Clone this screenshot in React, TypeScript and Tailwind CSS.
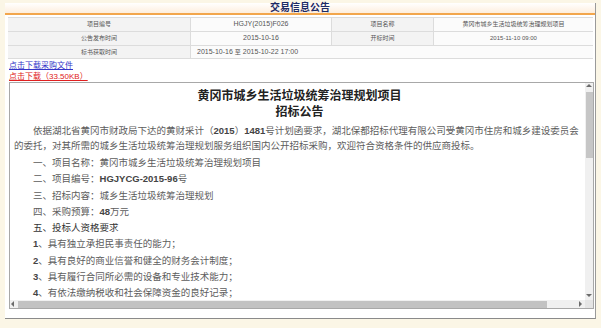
const sans = { fontFamily: '"Liberation Sans", "Noto Sans CJK SC", sans-serif' }

function Arrow({ dir }: { dir: 'up' | 'down' | 'left' | 'right' }) {
  const pts = {
    up: '1,4 4,1 7,4',
    down: '1,2 4,5 7,2',
    left: '4,1 1,4 4,7',
    right: '2,1 5,4 2,7',
  }[dir]
  return (
    <svg width="8" height="8" viewBox="0 0 8 8" className="block">
      <polygon points={pts} fill="#6b6b6b" />
    </svg>
  )
}

const infoRows = [
  { label: '项目编号', value: 'HGJY(2015)F026', label2: '项目名称', value2: '黄冈市城乡生活垃圾统筹治理规划项目' },
  { label: '公告发布时间', value: '2015-10-16', label2: '开标时间', value2: '2015-11-10 09:00' },
]

const items = [
  { text: '一、项目名称：黄冈市城乡生活垃圾统筹治理规划项目' },
  { text: '二、项目编号：', latin: 'HGJYCG-2015-96', tail: '号' },
  { text: '三、招标内容：城乡生活垃圾统筹治理规划' },
  { text: '四、采购预算：', latin: '48', tail: '万元' },
]

const quals = [
  '具有独立承担民事责任的能力；',
  '具有良好的商业信誉和健全的财务会计制度；',
  '具有履行合同所必需的设备和专业技术能力；',
  '有依法缴纳税收和社会保障资金的良好记录；',
]

export default function App() {
  return (
    <div className="w-[601px] h-[328px] overflow-hidden bg-[#fbf6e6] pt-[3px] pl-[5px]" style={sans}>
      <div className="w-[591px] h-[316px] bg-white border-r border-b border-r-[#9a9a9a] border-b-[#8a8a8a] flex flex-col">
        {/* title bar */}
        <div className="h-[12px] bg-gradient-to-b from-white to-[#fdeedd] border-b-2 border-[#f2a64c] flex items-center justify-center">
          <span className="text-[10px] leading-none font-bold text-[#1c2a66]">交易信息公告</span>
        </div>

        {/* info table */}
        <div className="ml-[3px] mt-[2px] w-[585px] text-[6px] text-[#555]">
          {infoRows.map((r) => (
            <div key={r.label} className="flex h-[14px] border-t border-[#dcdcdc]">
              <div className="w-[182px] bg-[#f3f3f3] flex items-center justify-center">{r.label}</div>
              <div className="w-[141px] border-l border-[#dcdcdc] bg-[#fbfbfb] flex items-center justify-center text-[7px]">{r.value}</div>
              <div className="w-[102px] border-l border-[#dcdcdc] bg-[#f3f3f3] flex items-center justify-center">{r.label2}</div>
              <div className="flex-1 border-l border-[#dcdcdc] bg-[#fbfbfb] flex items-center justify-center">{r.value2}</div>
            </div>
          ))}
          <div className="flex h-[14px] border-t border-b border-[#dcdcdc]">
            <div className="w-[182px] bg-[#f3f3f3] flex items-center justify-center">标书获取时间</div>
            <div className="flex-1 border-l border-[#dcdcdc] bg-[#fbfbfb] flex items-center pl-[6px] text-[7px] whitespace-nowrap">
              2015-10-16 <span className="text-[6px] mx-[2px]">至</span> 2015-10-22 17:00
            </div>
          </div>
        </div>

        {/* download links */}
        <div className="ml-[4px] mt-[1px] h-[22px] flex flex-col text-[8px] leading-[11px]">
          <span className="text-[#3434c8] underline">点击下载采购文件</span>
          <span className="text-[#e02020] underline">点击下载（33.50KB）</span>
        </div>

        {/* notice frame */}
        <div className="ml-[4px] w-[585px] h-[227px] border border-[#a8a8a8] flex flex-col">
          <div className="flex flex-1 min-h-0">
            <div className="flex-1 overflow-hidden pl-[4px] pt-[4px]" style={{ fontFamily: '"Noto Sans CJK SC", sans-serif' }}>
              <div className="text-center text-[12px] leading-[16px] font-bold text-[#222]">
                <div>黄冈市城乡生活垃圾统筹治理规划项目</div>
                <div>招标公告</div>
              </div>
              <div className="mt-[4px] text-[9.5px] leading-[15px] text-[#5c5c5c] whitespace-nowrap">
                <div className="h-[15px] pl-[19px]">
                  依据湖北省黄冈市财政局下达的黄财采计（<b className="text-[#444]" style={sans}>2015</b>）<b className="text-[#444]" style={sans}>1481</b>号计划函要求，湖北保都招标代理有限公司受黄冈市住房和城乡建设委员会
                </div>
                <div className="h-[15px]">的委托，对其所需的城乡生活垃圾统筹治理规划服务组织国内公开招标采购，欢迎符合资格条件的供应商投标。</div>
              </div>
              <div className="mt-[1px] pl-[19px] text-[9.5px] leading-[16.3px] text-[#5c5c5c] whitespace-nowrap">
                {items.map((it) => (
                  <div key={it.text} className="h-[16.3px]">
                    {it.text}
                    {it.latin && <span className="font-bold text-[#444]" style={sans}>{it.latin}</span>}
                    {it.tail}
                  </div>
                ))}
                <div className="h-[16.3px] text-[#333]">五、投标人资格要求</div>
                {quals.map((q, i) => (
                  <div key={q} className="h-[16.3px]">
                    <span className="font-bold text-[#444]" style={sans}>{i + 1}</span>、{q}
                  </div>
                ))}
              </div>
            </div>
            {/* vertical scrollbar */}
            <div className="w-[8px] bg-[#f0f0f0] flex flex-col items-center">
              <Arrow dir="up" />
              <div className="w-[7px] h-[66px] bg-[#c6c6c6] mt-[1px]" />
              <div className="flex-1" />
              <Arrow dir="down" />
            </div>
          </div>
          {/* horizontal scrollbar */}
          <div className="h-[8px] flex bg-[#f0f0f0]">
            <div className="flex-1 flex items-center">
              <Arrow dir="left" />
              <div className="w-[529px] h-[7px] bg-[#c2c2c2]" />
              <div className="flex-1" />
              <Arrow dir="right" />
            </div>
            <div className="w-[8px] bg-[#e4e4e4]" />
          </div>
        </div>
      </div>
    </div>
  )
}
